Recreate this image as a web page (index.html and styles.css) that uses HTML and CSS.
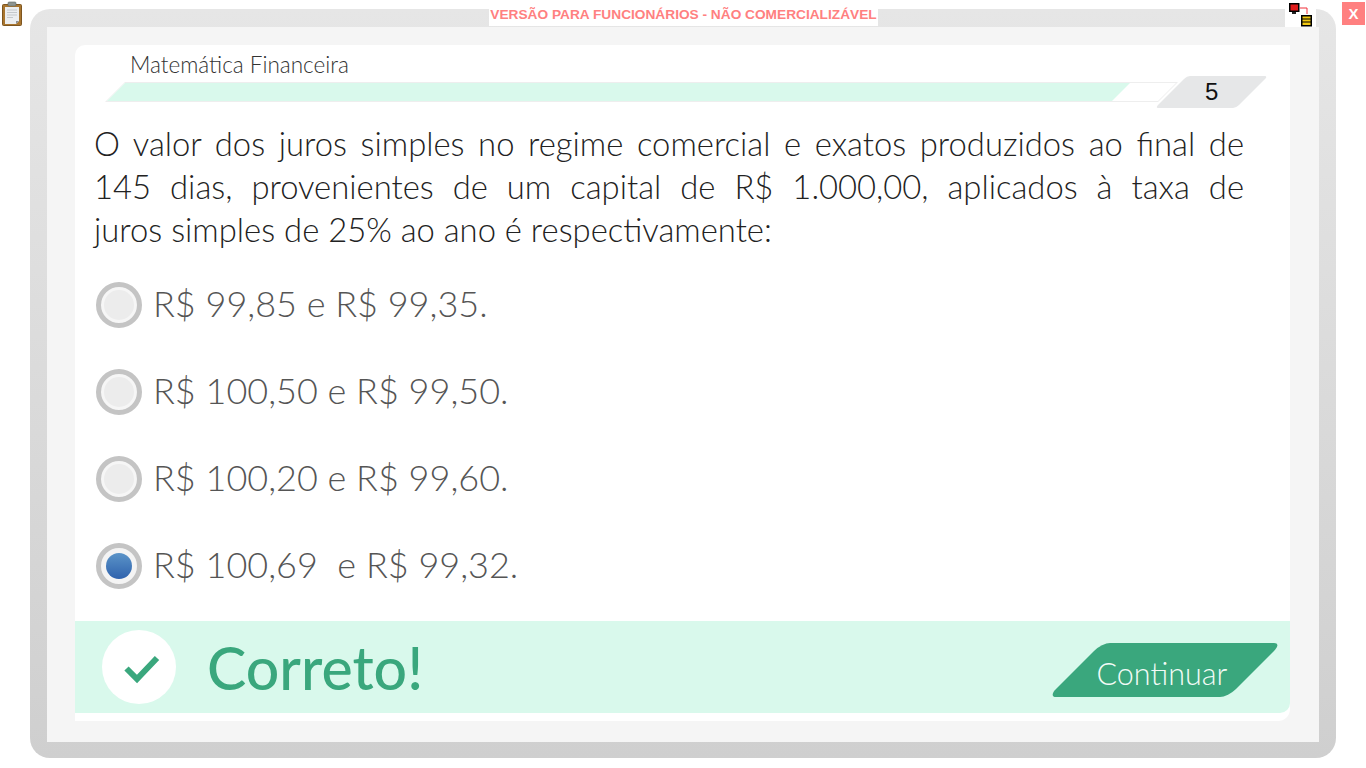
FILE: index.html
```html
<!DOCTYPE html>
<html lang="pt-BR">
<head>
    <meta charset="UTF-8">
    <meta name="viewport" content="width=device-width, initial-scale=1.0">
    <title>Matemática Financeira</title>
    <link rel="stylesheet" href="styles.css">
</head>
<body>
    <!-- Clipboard icon -->
    <svg class="clipboard" width="22" height="25" viewBox="0 0 22 25">
        <rect x="1.500" y="3.500" width="19" height="21" rx="1" fill="#a9762f" stroke="#7d5520"/>
        <path d="M4 6h14v14l-3 3H4z" fill="#eceef0"/>
        <path d="M15 23l3-3h-3z" fill="#8b8f94"/>
        <path d="M6 9h10M6 11.500h10M6 14h10M6 16.500h6" stroke="#c4c8cc" stroke-width="1"/>
        <rect x="7" y="1" width="8" height="4" rx="1" fill="#8d9490" stroke="#5f6662" stroke-width="0.600"/>
    </svg>

    <div class="banner">VERSÃO PARA FUNCIONÁRIOS - NÃO COMERCIALIZÁVEL</div>

    <!-- Network status icon -->
    <div class="network">
        <svg width="31" height="18" viewBox="0 0 31 18">
            <rect x="4.750" y="-5.250" width="9" height="7.500" fill="#e01b1b" stroke="#000" stroke-width="1.500"/>
            <rect x="7" y="3" width="4" height="2" fill="#222"/>
            <path d="M15 -1h7v6" fill="none" stroke="#f0303a" stroke-width="1"/>
            <rect x="16.750" y="6.750" width="9.500" height="10" fill="#f2c811" stroke="#000" stroke-width="1.500"/>
            <path d="M17 10h9M17 13h9" stroke="#000" stroke-width="1"/>
        </svg>
    </div>

    <button class="close" type="button">X</button>

    <div class="frame">
        <div class="inner">
            <div class="card">
                <h2 class="subject">Matemática Financeira</h2>
                <div class="progress-row">
                    <div class="progress">
                        <div class="progress-fill" style="width: 1005px"></div>
                    </div>
                    <div class="badge"><span>5</span></div>
                </div>

                <p class="question">O valor dos juros simples no regime comercial e exatos produzidos ao final de 145 dias, provenientes de um capital de R$ 1.000,00, aplicados à taxa de juros&nbsp;simples de 25% ao ano é respectivamente:</p>

                <div class="options">
                    <label class="option"><span class="radio"></span>R$ 99,85 e R$ 99,35.</label>
                    <label class="option"><span class="radio"></span>R$ 100,50 e R$ 99,50.</label>
                    <label class="option"><span class="radio"></span>R$ 100,20 e R$ 99,60.</label>
                    <label class="option"><span class="radio selected"></span>R$ 100,69&nbsp; e R$ 99,32.</label>
                </div>

                <div class="result">
                    <div class="check">
                        <svg width="74" height="74" viewBox="0 0 74 74">
                            <path d="M24.500 38.500L35 49L55 28" fill="none" stroke="#3aa77d" stroke-width="6"/>
                        </svg>
                    </div>
                    <div class="result-text">Correto!</div>
                    <button class="continue" type="button"><span>Continuar</span></button>
                </div>
            </div>
        </div>
    </div>
</body>
</html>
```

FILE: styles.css
```css
html, body {
    height: 100%;
}

body {
    margin: 0;
    padding: 9px 30px 0 30px;
    box-sizing: border-box;
    overflow: hidden;
    background-color: #fff;
    color: #333;
    font-family: 'Lato', 'Liberation Sans', sans-serif;
    font-weight: 300;
}

.clipboard {
    position: absolute;
    left: 1px;
    top: 1px;
}

.banner {
    position: absolute;
    left: 489px;
    top: 9px;
    width: 389px;
    height: 17px;
    background-color: #fff;
    color: #ff8080;
    font-family: 'Liberation Sans', sans-serif;
    font-size: 13.700px;
    font-weight: bold;
    line-height: 11px;
    text-align: center;
    white-space: nowrap;
}

.network {
    position: absolute;
    left: 1285px;
    top: 9px;
    width: 31px;
    height: 18px;
    background-color: #fff;
}

.network svg {
    display: block;
    overflow: visible;
}

.close {
    position: absolute;
    left: 1342px;
    top: 2px;
    width: 23px;
    height: 23px;
    padding: 0;
    border: none;
    background-color: #ff8080;
    color: #fff;
    font-family: 'Liberation Sans', sans-serif;
    font-size: 15px;
    font-weight: bold;
}

.frame {
    height: 749px;
    padding: 18px 17px 16px 17px;
    box-sizing: border-box;
    border-radius: 20px;
    background: linear-gradient(#e6e6e6, #cfcfcf);
}

.inner {
    height: 100%;
    padding: 18px 29px 21px 28px;
    box-sizing: border-box;
    background-color: #f5f5f5;
}

.card {
    display: flex;
    flex-direction: column;
    height: 100%;
    padding-bottom: 8px;
    box-sizing: border-box;
    border-radius: 10px 0 12px 0;
    background-color: #fff;
}

.subject {
    margin: 6px 0 0 55px;
    color: #333;
    font-size: 22.500px;
    font-weight: 300;
    line-height: 27px;
}

.progress-row {
    display: flex;
    align-items: center;
    height: 32px;
    margin: -2px 0 0 40px;
}

.progress {
    width: 1053px;
    height: 20px;
    box-sizing: border-box;
    border: 1px solid #eee;
    background-color: #fff;
    transform: skewX(-45deg);
}

.progress-fill {
    height: 100%;
    background-color: #d9f9ec;
}

.badge {
    width: 81px;
    height: 32px;
    margin-left: 3px;
    border-radius: 3px;
    background-color: #e6e7e8;
    color: #111;
    font-family: 'Liberation Sans', sans-serif;
    font-size: 24px;
    font-weight: normal;
    line-height: 32px;
    text-align: center;
    transform: skewX(-45deg);
}

.badge span {
    display: inline-block;
    transform: skewX(45deg);
}

.question {
    margin: 14px 46px 0 19px;
    color: #222;
    font-size: 32.800px;
    line-height: 43px;
    text-align: justify;
}

.options {
    display: flex;
    flex-direction: column;
    gap: 41px;
    margin: 31px 0 0 21px;
}

.option {
    display: flex;
    align-items: flex-start;
    gap: 11px;
    height: 46px;
    color: #555;
    font-size: 36px;
    line-height: 42px;
}

.radio {
    display: flex;
    align-items: center;
    justify-content: center;
    width: 46px;
    height: 46px;
    box-sizing: border-box;
    border: 5px solid #c4c4c4;
    border-radius: 50%;
    background-color: #ececec;
    box-shadow: inset 0 0 0 3px #f6f6f6;
}

.radio.selected {
    background-color: #f4f4f4;
    box-shadow: none;
}

.radio.selected::after {
    content: "";
    width: 26px;
    height: 26px;
    border-radius: 50%;
    background: linear-gradient(#5b94c8, #2f62ad);
}

.result {
    display: flex;
    align-items: center;
    height: 92px;
    margin-top: auto;
    padding: 0 35px 0 27px;
    border-radius: 0 0 10px 0;
    background-color: #d9f9ec;
}

.check {
    width: 74px;
    height: 74px;
    border-radius: 50%;
    background-color: #fff;
}

.check svg {
    display: block;
}

.result-text {
    margin-left: 31px;
    color: #3aa77d;
    font-size: 59px;
    font-weight: 500;
}

.continue {
    width: 180px;
    height: 54px;
    margin-top: 6px;
    margin-left: auto;
    padding: 0 5px 0 0;
    border: none;
    border-radius: 8px;
    background-color: #3aa77d;
    color: #f2fbf7;
    font-family: 'Lato', sans-serif;
    font-size: 30.500px;
    font-weight: 300;
    transform: skewX(-45deg);
}

.continue span {
    display: inline-block;
    padding-top: 5px;
    transform: skewX(45deg);
}
```
